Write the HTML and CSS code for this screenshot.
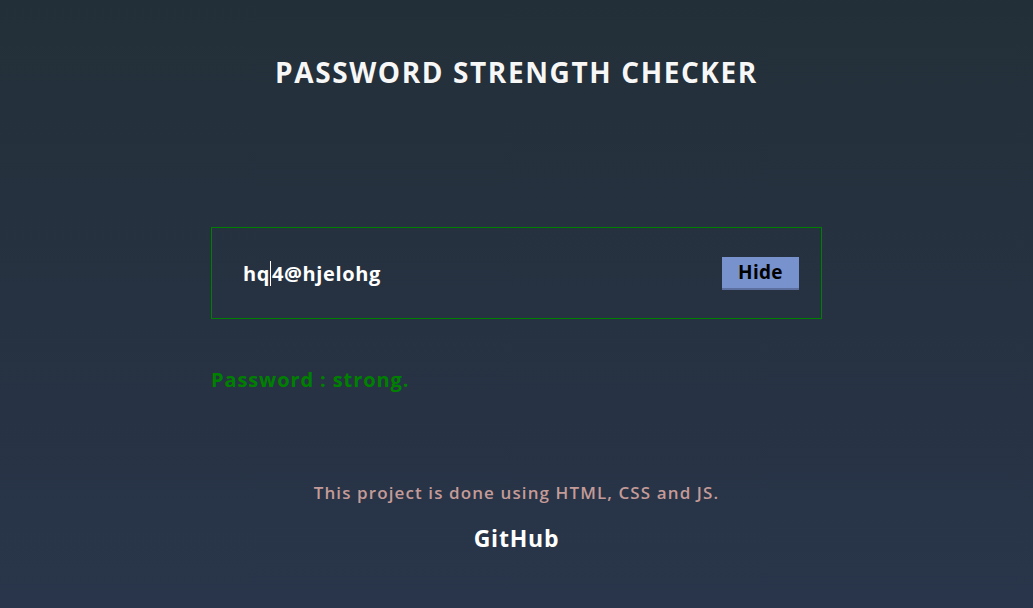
FILE: index.html
```html
<!DOCTYPE html>
<html lang="en">
<head>
<meta charset="utf-8">
<title>Password Strength Checker</title>
<link rel="stylesheet" href="styles.css">
</head>
<body>
<main class="page">
  <h1 class="title">PASSWORD STRENGTH CHECKER</h1>
  <section class="checker">
    <div class="field">
      <div class="value">hq<span class="caret"></span>4@hjelohg</div>
      <button class="toggle" type="button">Hide</button>
    </div>
    <p class="status">Password : strong.</p>
  </section>
  <footer class="footer">
    <p class="credit">This project is done using HTML, CSS and JS.</p>
    <a class="link" href="#">GitHub</a>
  </footer>
</main>
</body>
</html>
```
FILE: styles.css
```css
* { box-sizing: border-box; }
html, body { margin: 0; padding: 0; }
body {
  min-height: 608px;
  background: linear-gradient(180deg, #232f38 0%, #29354a 100%);
  font-family: "Open Sans", "Liberation Sans", sans-serif;
  color: #fff;
}
.page {
  display: flex;
  flex-direction: column;
  align-items: center;
  min-height: 608px;
}
.title {
  margin: 53px 0 0;
  font-size: 28px;
  font-weight: 700;
  line-height: 38px;
  color: #f7f7f7;
  letter-spacing: 1.6px;
}
.checker {
  width: 611px;
  margin-top: 136px;
}
.field {
  height: 92px;
  border: 1px solid #008000;
  display: flex;
  align-items: center;
  justify-content: space-between;
  padding: 0 22px 0 31px;
}
.value {
  font-size: 20px;
  font-weight: 700;
  color: #fff;
  display: flex;
  align-items: center;
  letter-spacing: 0.6px;
}
.caret {
  display: inline-block;
  width: 1px;
  height: 25px;
  background: #fff;
  margin: 0 1px 0 0;
}
.toggle {
  width: 77px;
  height: 33px;
  border: none;
  border-bottom: 2px solid #5c6f9e;
  background: #7792cd;
  color: #000;
  font-family: inherit;
  font-size: 19px;
  font-weight: 700;
  padding: 0;
  letter-spacing: 0.3px;
}
.status {
  margin: 49px 0 0;
  font-size: 20px;
  font-weight: 700;
  color: #008000;
  line-height: 24px;
  letter-spacing: 0.9px;
}
.footer {
  margin-top: 90px;
  display: flex;
  flex-direction: column;
  align-items: center;
}
.credit {
  margin: 0;
  font-size: 17px;
  font-weight: 600;
  color: #c49b98;
  line-height: 22px;
  letter-spacing: 1.1px;
}
.link {
  margin-top: 20px;
  font-size: 23px;
  font-weight: 700;
  color: #fff;
  text-decoration: none;
  line-height: 28px;
  letter-spacing: 0.8px;
}
```
